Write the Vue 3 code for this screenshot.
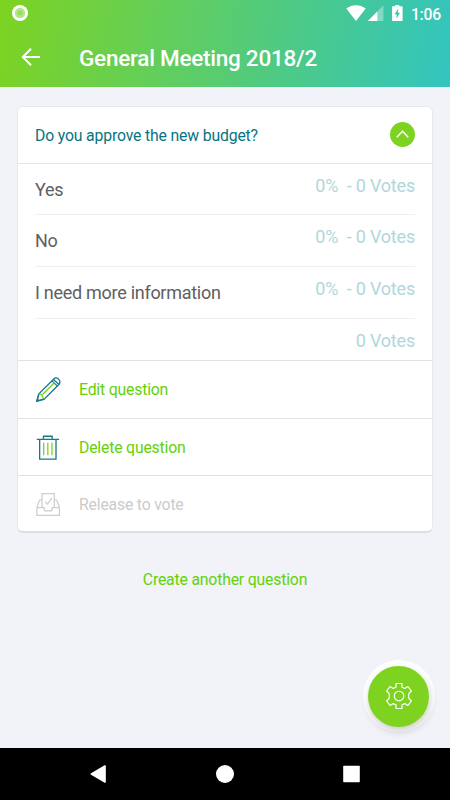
<script setup>
const options = [
  { label: 'Yes', votes: '0%\u00a0 - 0 Votes' },
  { label: 'No', votes: '0%\u00a0 - 0 Votes' },
  { label: 'I need more information', votes: '0%\u00a0 - 0 Votes' },
]
</script>

<template>
  <div class="screen">
    <header class="header">
      <div class="status">
        <svg class="recorder" viewBox="0 0 16 16">
          <circle cx="8" cy="8" r="8" fill="#fff" />
          <circle cx="8" cy="8" r="5.2" fill="#b4e688" />
          <circle cx="8" cy="8" r="2.5" fill="#97dc65" />
        </svg>
        <svg class="indicators" viewBox="0 0 60 18">
          <path d="M0.3 4.5C6 0 14 0 19.7 4.5L10 17Z" fill="#fff" />
          <path d="M37.4 1.5V17H21.9Z" fill="#fff" opacity=".35" />
          <path d="M31.4 7.5V17H21.9Z" fill="#fff" />
          <path d="M46.7 2.2h2.5V1h4v1.2H56q.6 0 .6.6V16.4q0 .6-.6.6h-9.3q-.6 0-.6-.6V2.8q0-.6.6-.6Z" fill="#fff" />
          <path d="M52.3 4.8L48.5 10.3h2.1V14.6L54 8.8h-2.1Z" fill="#3fc5a6" />
        </svg>
        <span class="time">1:06</span>
      </div>
      <div class="toolbar">
        <svg class="back" viewBox="0 0 20 18" fill="none" stroke="#fff" stroke-width="2">
          <path d="M19 9H2M10 .8L1.8 9L10 17.2" />
        </svg>
        <h1>General Meeting 2018/2</h1>
      </div>
    </header>

    <main>
      <section class="card">
        <div class="question">
          <span>Do you approve the new budget?</span>
          <button class="collapse" aria-label="Collapse">
            <svg viewBox="0 0 25 25" fill="none" stroke="#fff" stroke-width="1.4">
              <path d="M6.8 15.2L12.5 9.2L18.2 15.2" />
            </svg>
          </button>
        </div>
        <div class="results">
          <div v-for="option in options" :key="option.label" class="option">
            <span>{{ option.label }}</span>
            <span class="votes">{{ option.votes }}</span>
          </div>
          <div class="total"><span class="votes">0 Votes</span></div>
        </div>
        <div class="action">
          <svg viewBox="0 0 26 26" fill="none" stroke="#16798a" stroke-width="1.35">
            <path d="M.8 25.2L3 17.5L18.5 2Q20.5 0 23 1.7Q26 4.5 24.2 7.3L8.5 23Z" />
            <path d="M16.5 4L22.3 9.5M18.2 2.5L23.9 7.9" />
            <path d="M3 17.5L6.1 18.3L7 21.3L8.5 23M7 18L18.6 6.4" stroke="#7ed321" stroke-width="1.5" />
            <path d="M.8 25.2L3 17.5M.8 25.2L8.5 23M1.4 23L3 24.6" />
          </svg>
          <span>Edit question</span>
        </div>
        <div class="action">
          <svg viewBox="0 0 26 26" fill="none" stroke="#16798a" stroke-width="1.35">
            <path d="M.8 4.5H24M7.8 4.5V1.3H16.8V4.5M3.8 4.5V25H20.8V4.5" />
            <path d="M8 8V21M12.3 8V21M16.6 8V21" stroke="#7ed321" />
          </svg>
          <span>Delete question</span>
        </div>
        <div class="action disabled">
          <svg viewBox="0 0 26 26" fill="none" stroke="#cecece" stroke-width="1.3">
            <path d="M6.2 16.2V1.8H19V16.2M3.7 8.3L.9 16.2V24.2H24.4V16.2L21.6 8.3M.9 16.2H8.5V17.3Q8.5 19.7 10.5 19.7H14.8Q16.8 19.7 16.8 17.3V16.2H24.4" />
            <path d="M3.7 8.3H6.2M19 8.3H21.6M9.5 10.2L11.9 12.6L16.6 6.2" />
          </svg>
          <span>Release to vote</span>
        </div>
      </section>
      <button class="create">Create another question</button>
      <div class="fab-ring">
        <button class="fab" aria-label="Settings">
          <svg viewBox="0 0 26 26" fill="none" stroke="#fff" stroke-width="1.15" stroke-linejoin="round">
            <path d="M10 .5H16V4.2L18.8 5.4L21.9 3.6L25.4 8L22.8 10.6V15.4L25.4 18L21.9 22.4L18.8 20.6L16 21.8V25.5H10V21.8L7.2 20.6L4.1 22.4L.6 18L3.2 15.4V10.6L.6 8L4.1 3.6L7.2 5.4L10 4.2Z" />
            <circle cx="13" cy="13" r="4.8" />
          </svg>
        </button>
      </div>
    </main>

    <nav class="navbar">
      <svg viewBox="0 0 18 18"><path d="M1 8.2L14.6 .3Q15.8 -.2 15.8 1V17Q15.8 18.2 14.6 17.7L1 9.8Q-.2 9 1 8.2Z" /></svg>
      <svg viewBox="0 0 18 18"><circle cx="9" cy="9" r="9" /></svg>
      <svg viewBox="0 0 18 18"><rect x="1.2" y=".7" width="16.6" height="16.6" rx=".8" /></svg>
    </nav>
  </div>
</template>

<style>
body {
  margin: 0;
}
</style>

<style scoped>
.screen {
  width: 450px;
  height: 800px;
  display: flex;
  flex-direction: column;
  overflow: hidden;
  background: #f1f3f8;
  font-family: Roboto, sans-serif;
}
svg {
  display: block;
  flex: none;
  overflow: visible;
}
button {
  border: 0;
  padding: 0;
  font: inherit;
}
.header {
  height: 87px;
  background: linear-gradient(101deg, #7ed321 0%, #32c5c0 100%);
  color: #fff;
}
.status {
  height: 27px;
  display: flex;
  align-items: center;
  padding: 0 9px 0 12px;
}
.recorder {
  width: 16px;
  height: 16px;
  margin-top: -1px;
}
.indicators {
  width: 60px;
  height: 18px;
  margin: -1px 5px 0 auto;
}
.time {
  margin-top: 1px;
  font-size: 15.7px;
  font-weight: 500;
  letter-spacing: -0.2px;
}
.toolbar {
  height: 60px;
  display: flex;
  align-items: center;
  padding-left: 21px;
}
.back {
  width: 20px;
  height: 18px;
}
h1 {
  margin: 2px 0 0 38px;
  font-size: 22.5px;
  font-weight: 500;
  line-height: 28px;
  letter-spacing: -0.25px;
}
main {
  position: relative;
  flex: 1;
  padding: 19px 17px 0;
}
.card {
  box-sizing: border-box;
  height: 427px;
  border: 1px solid #e6e8ed;
  border-bottom: 2px solid #dcdee1;
  border-radius: 6px;
  background: #fff;
}
.question {
  box-sizing: border-box;
  height: 56.5px;
  display: flex;
  align-items: center;
  justify-content: space-between;
  padding: 0 17px;
  border-bottom: 1px solid #e4e5e7;
  color: #087482;
  font-size: 15.8px;
  letter-spacing: -0.17px;
}
.question span {
  margin-top: 1px;
}
.collapse {
  width: 25px;
  height: 25px;
  border-radius: 50%;
  background: #7ed321;
}
.results {
  height: 196.8px;
  padding: 0 17px;
}
.option {
  box-sizing: border-box;
  height: 51.7px;
  display: flex;
  justify-content: space-between;
  padding-top: 12px;
  border-bottom: 1px solid #efefef;
  color: #606060;
  font-size: 18px;
  line-height: 28px;
  letter-spacing: -0.28px;
}
.votes {
  color: #b0d7dc;
  font-size: 18px;
  line-height: 20px;
  letter-spacing: -0.2px;
}
.total {
  padding-top: 12px;
  text-align: right;
}
.action {
  box-sizing: border-box;
  height: 57.5px;
  display: flex;
  align-items: center;
  gap: 18px;
  padding-left: 18px;
  border-top: 1px solid #e0e1e3;
  color: #64d10b;
  font-size: 15.8px;
  letter-spacing: -0.19px;
}
.action span {
  margin-top: 0.8px;
}
.action svg {
  width: 25px;
  height: 25px;
}
.disabled {
  color: #cbcbcb;
}
.create {
  display: block;
  margin: 37px auto 0;
  background: none;
  color: #64d10b;
  font-size: 15.8px;
  line-height: 20px;
  letter-spacing: -0.19px;
}
.fab-ring {
  position: absolute;
  right: 15.5px;
  bottom: 16px;
  width: 72px;
  height: 72px;
  display: grid;
  place-items: center;
  border-radius: 50%;
  background: #fff;
}
.fab {
  width: 61px;
  height: 61px;
  display: grid;
  place-items: center;
  border-radius: 50%;
  background: #7ed321;
  box-shadow: 1px 4px 8px rgba(0, 0, 0, 0.2);
}
.fab svg {
  width: 26px;
  height: 26px;
}
.navbar {
  height: 52px;
  display: flex;
  align-items: center;
  justify-content: space-between;
  box-sizing: border-box;
  padding: 0 90px 1px;
  background: #000;
}
.navbar svg {
  width: 18px;
  height: 18px;
  fill: #fff;
}
</style>
